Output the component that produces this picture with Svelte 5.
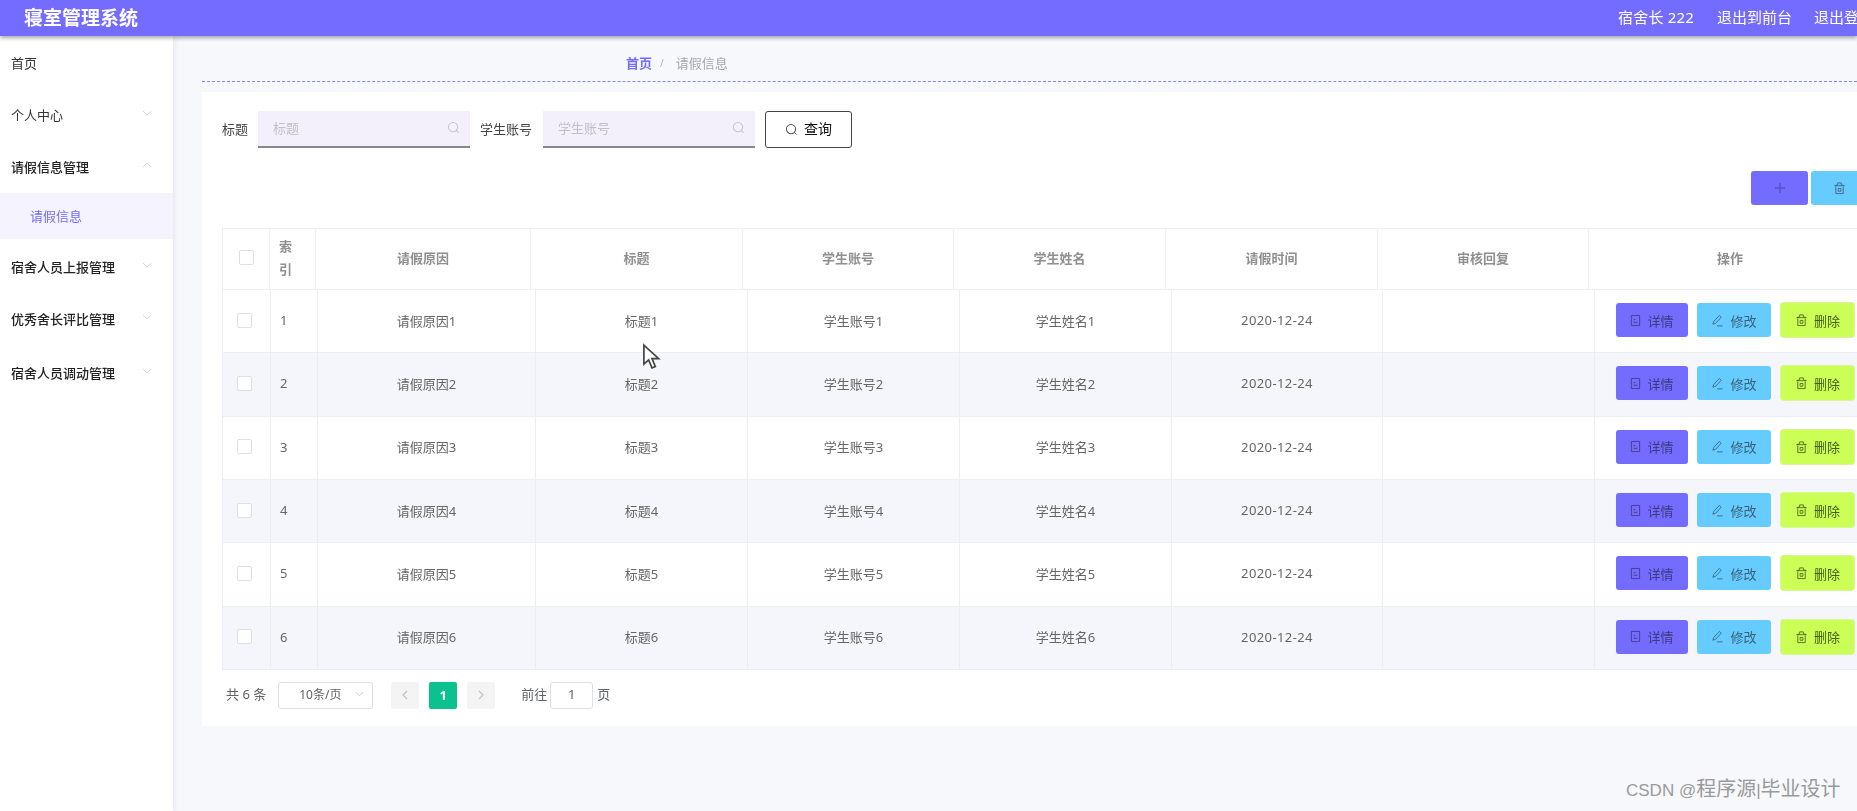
<script>
  const menu = [
    { label: '首页' },
    { label: '个人中心', arrow: 'down' },
    { label: '请假信息管理', arrow: 'up', strong: true },
    { label: '请假信息', sub: true },
    { label: '宿舍人员上报管理', arrow: 'down', strong: true },
    { label: '优秀舍长评比管理', arrow: 'down', strong: true },
    { label: '宿舍人员调动管理', arrow: 'down', strong: true, last: true }
  ];
  const heads = ['请假原因', '标题', '学生账号', '学生姓名', '请假时间', '审核回复', '操作'];
  const rows = [1, 2, 3, 4, 5, 6];
</script>

{#snippet search()}
  <svg class="ico" viewBox="0 0 14 14" width="13" height="13"><circle cx="6.500" cy="6.500" r="5" fill="none" stroke="currentColor" stroke-width="1.100"/><path d="M10 10l2.500 2.500" stroke="currentColor" stroke-width="1.100" fill="none"/></svg>
{/snippet}
{#snippet trash()}
  <svg viewBox="0 0 14 14" width="13" height="14"><path d="M3 5.500v7.500h8V5.500M1.800 4.500l3.200-1V1.500h4v2l3.200 1zM5.500 7.500h3v3h-3z" fill="none" stroke="currentColor" stroke-width=".9"/></svg>
{/snippet}

<div class="page">
  <header class="top">
    <div class="brand">寝室管理系统</div>
    <div class="user">
      <span class="who">宿舍长 222</span>
      <span>退出到前台</span>
      <span>退出登录</span>
    </div>
  </header>

  <div class="body">
    <aside class="side">
      {#each menu as m}
        <div class="item" class:sub={m.sub} class:strong={m.strong} class:last={m.last}>
          <span>{m.label}</span>
          {#if m.arrow}
            <svg class="chev" class:up={m.arrow === 'up'} viewBox="0 0 10 6" width="10" height="6"><path d="M1 1l4 4 4-4" fill="none" stroke="#d8d8de" stroke-width="1"/></svg>
          {/if}
        </div>
      {/each}
    </aside>

    <main class="main">
      <nav class="crumbs">
        <b>首页</b><i>/</i><span>请假信息</span>
      </nav>
      <section class="card">
        <div class="inner">
          <div class="filters">
            <label class="lab" for="f1">标题</label>
            <div class="field">
              <input id="f1" placeholder="标题" />
              {@render search()}
            </div>
            <label class="lab second" for="f2">学生账号</label>
            <div class="field">
              <input id="f2" placeholder="学生账号" />
              {@render search()}
            </div>
            <button class="query">
              <svg viewBox="0 0 14 14" width="13" height="13"><circle cx="6.500" cy="6.500" r="5" fill="none" stroke="#555" stroke-width="1.100"/><path d="M10 10l2.500 2.500" stroke="#555" fill="none"/></svg>
              <span>查询</span>
            </button>
          </div>

          <div class="actions">
            <button class="act purple"><svg viewBox="0 0 12 12" width="12" height="12"><path d="M6 1v10M1 6h10" stroke="#4b4a9c" stroke-width="1"/></svg></button>
            <button class="act blue">{@render trash()}</button>
          </div>

          <div class="table">
            <div class="tr head">
              <div class="td"><span class="check"></span></div>
              <div class="td idx">索引</div>
              {#each heads as h}<div class="td">{h}</div>{/each}
            </div>
            {#each rows as r}
              <div class="tr row" class:odd={r % 2 === 0}>
                <div class="td box"><span class="check"></span></div>
                <div class="td num">{r}</div>
                <div class="td">请假原因{r}</div>
                <div class="td">标题{r}</div>
                <div class="td">学生账号{r}</div>
                <div class="td">学生姓名{r}</div>
                <div class="td date">2020-12-24</div>
                <div class="td"></div>
                <div class="td ops">
                  <button class="op purple">
                    <svg viewBox="0 0 12 14" width="11" height="13"><path d="M1.500 1.500h9v11h-9zM4 6h2M4 9h4" fill="none" stroke="currentColor" stroke-width=".9"/></svg>
                    详情
                  </button>
                  <button class="op blue edit">
                    <svg viewBox="0 0 14 14" width="13" height="13"><path d="M2 11l1-3 6-6.500 2 2-6 6.500zM6.500 12.800h6" fill="none" stroke="currentColor" stroke-width=".9"/></svg>
                    修改
                  </button>
                  <button class="op lime">{@render trash()}删除</button>
                </div>
              </div>
            {/each}
          </div>

          <div class="pager">
            <span class="txt">共 6 条</span>
            <div class="size">10条/页
              <svg viewBox="0 0 10 6" width="9" height="6"><path d="M1 1l4 4 4-4" fill="none" stroke="#c0c4cc"/></svg>
            </div>
            <span class="pg">
              <svg viewBox="0 0 6 10" width="6" height="10"><path d="M5 1L1 5l4 4" fill="none" stroke="#c0c4cc" stroke-width="1.300"/></svg>
            </span>
            <span class="pg on">1</span>
            <span class="pg">
              <svg viewBox="0 0 6 10" width="6" height="10"><path d="M1 1l4 4-4 4" fill="none" stroke="#c0c4cc" stroke-width="1.300"/></svg>
            </span>
            <span class="txt goto">前往</span>
            <span class="jump">1</span>
            <span class="txt">页</span>
          </div>
        </div>
      </section>
    </main>
  </div>

  <svg class="cursor" viewBox="0 0 20 28" width="19" height="28"><path d="M2 1.500v20l5-4.500 3.500 8.500 3.500-1.500-3.500-8.200h7z" fill="#fff" stroke="#444" stroke-width="1.800"/></svg>
</div>

<div class="mark">CSDN @<em>程序源</em>|<em>毕业设计</em></div>

<style>
  :global(body) {
    margin: 0;
    background: #f7f8fc;
    overflow: hidden;
  }
  .page {
    position: relative;
    width: 1857px;
    height: 811px;
    overflow: hidden;
    background: #f7f8fc;
    font: 13px "Noto Sans", "Noto Sans CJK SC", sans-serif;
    color: #666;
    filter: blur(0.6px);
  }
  button {
    font: inherit;
    border: 0;
    padding: 0;
    display: flex;
    align-items: center;
    justify-content: center;
  }
  .top {
    position: relative;
    z-index: 2;
    height: 36px;
    background: #746cff;
    color: #fff;
    box-shadow: 0 2px 4px rgba(60, 60, 60, 0.45);
    display: flex;
    justify-content: space-between;
    align-items: center;
    padding: 0 0 3px 24px;
    box-sizing: border-box;
  }
  .brand {
    font-size: 19px;
    font-weight: 700;
  }
  .user {
    display: flex;
    gap: 22px;
    font-size: 15px;
    width: 239px;
    white-space: nowrap;
  }
  .who {
    margin-right: 1px;
    letter-spacing: 0.2px;
  }
  .body {
    display: flex;
    height: 775px;
  }
  .side {
    width: 173px;
    flex: none;
    background: #fff;
    box-shadow: 2px 0 5px rgba(60, 60, 90, 0.08);
    padding-top: 1px;
    color: #333;
  }
  .item {
    height: 52px;
    display: flex;
    align-items: center;
    justify-content: space-between;
    padding: 0 21px 1px 11px;
    box-sizing: border-box;
  }
  .strong {
    color: #222;
    font-weight: 500;
  }
  .sub {
    height: 46px;
    margin-bottom: 2px;
    padding-left: 30px;
    background: #f5f3fd;
    color: #746cff;
  }
  .last {
    margin-top: 2px;
  }
  .chev {
    margin-top: -4px;
  }
  .chev.up {
    transform: rotate(180deg);
  }
  .main {
    flex: 1;
    min-width: 0;
    padding-left: 29px;
  }
  .crumbs {
    height: 46px;
    box-sizing: border-box;
    border-bottom: 1.500px dashed #8a84f0;
    padding: 18px 0 10px 424px;
    display: flex;
    align-items: center;
    color: #a3a6b4;
    line-height: 18px;
  }
  .crumbs b {
    color: #746cff;
  }
  .crumbs i {
    font-style: normal;
    font-size: 10px;
    margin: 0 12px 0 8px;
    color: #b0b2bc;
  }
  .card {
    margin-top: 10px;
    height: 634px;
    background: #fff;
    overflow: hidden;
    padding: 19px 0 0 20px;
    box-sizing: border-box;
  }
  .inner {
    width: 1650px;
  }
  .filters {
    display: flex;
    align-items: center;
    height: 37px;
  }
  .lab {
    color: #444;
    margin: 0 10px 2px 0;
    white-space: nowrap;
  }
  .lab.second {
    margin-right: 11px;
  }
  .field {
    width: 212px;
    height: 37px;
    box-sizing: border-box;
    margin-right: 10px;
    padding: 0 10px 2px 15px;
    background: #f3f0fb;
    border-bottom: 2px solid #888;
    display: flex;
    align-items: center;
    color: #c4c4cc;
  }
  .field input {
    flex: 1;
    min-width: 0;
    border: 0;
    outline: 0;
    background: none;
    font: inherit;
    padding: 0;
  }
  .field input::placeholder {
    color: #c0c0ca;
  }
  .query {
    width: 87px;
    height: 37px;
    box-sizing: border-box;
    gap: 6px;
    background: #fff;
    border: 1.500px solid #444;
    border-radius: 3px;
    color: #111;
    font-size: 14px;
  }
  .query span {
    margin-bottom: 3px;
  }
  .actions {
    display: flex;
    justify-content: flex-end;
    gap: 3px;
    margin: 23px 4px 23px 0;
  }
  .act {
    width: 57px;
    height: 34px;
    border-radius: 3px;
  }
  .purple {
    background: #746cff;
    color: #3c3a80;
  }
  .blue {
    background: #66ccff;
    color: #3a6078;
  }
  .lime {
    background: #ccff55;
    color: #45601f;
    box-shadow: 0 0 0 1px #d8f59a;
  }
  .table {
    border-left: 1px solid #ebeef5;
    border-top: 1px solid #ebeef5;
  }
  .tr {
    display: grid;
    border-bottom: 1px solid #ebeef5;
    box-sizing: border-box;
  }
  .head {
    height: 61px;
    grid-template-columns: 47px 46px 215px 212px 211px 212px 212px 211px 1fr;
    color: #8f8f8f;
    font-weight: 700;
  }
  .head .td {
    padding-bottom: 3px;
  }
  .row {
    height: 63.330px;
    grid-template-columns: 48px 47px 218px 212px 212px 212px 211px 212px 1fr;
  }
  .row .td {
    padding-bottom: 2px;
  }
  .odd {
    background: #f5f6fb;
  }
  .td {
    display: flex;
    align-items: center;
    justify-content: center;
    border-right: 1px solid #ebeef5;
    box-sizing: border-box;
  }
  .row .box {
    padding-right: 5px;
  }
  .idx {
    padding: 0 12px 0 9px;
    line-height: 23px;
    justify-content: flex-start;
  }
  .row .num {
    justify-content: flex-start;
    padding-left: 9px;
  }
  .date {
    letter-spacing: 0.4px;
  }
  .check {
    width: 13px;
    height: 13px;
    background: #fff;
    border: 1px solid #dcdfe6;
    border-radius: 2px;
  }
  .row .ops {
    justify-content: flex-start;
    padding-left: 21px;
    gap: 9px;
  }
  .op {
    height: 34px;
    width: 72px;
    gap: 6px;
    border-radius: 3px;
    flex: none;
  }
  .op.edit {
    width: 74px;
  }
  .op.lime {
    width: 73px;
    margin-left: 1px;
  }
  .pager {
    display: flex;
    align-items: center;
    height: 27px;
    margin: 12px 0 0 4px;
    color: #606266;
  }
  .txt {
    margin-bottom: 3px;
  }
  .size {
    margin-left: 12px;
    width: 95px;
    height: 27px;
    box-sizing: border-box;
    border: 1px solid #dcdfe6;
    border-radius: 3px;
    display: flex;
    align-items: center;
    justify-content: space-between;
    padding: 0 8px 2px 20px;
    margin-right: 18px;
    font-size: 12px;
  }
  .pg {
    width: 28px;
    height: 27px;
    margin-right: 10px;
    background: #f4f4f5;
    border-radius: 2px;
    display: flex;
    align-items: center;
    justify-content: center;
    box-sizing: border-box;
    padding-bottom: 1px;
  }
  .pg.on {
    background: #0bc28f;
    color: #fff;
    font-weight: 700;
  }
  .goto {
    margin: 0 3px 3px 16px;
  }
  .jump {
    width: 43px;
    height: 27px;
    box-sizing: border-box;
    border: 1px solid #dcdfe6;
    border-radius: 3px;
    margin-right: 4px;
    padding-bottom: 2px;
    display: flex;
    align-items: center;
    justify-content: center;
  }
  .cursor {
    position: absolute;
    left: 642px;
    top: 343px;
  }
  .mark {
    position: absolute;
    left: 1626px;
    top: 774px;
    font: 17px/30px "Liberation Sans", "Noto Sans CJK SC", sans-serif;
    color: #9a9a9a;
    white-space: nowrap;
  }
  .mark em {
    font-style: normal;
    font-size: 20px;
  }
</style>
